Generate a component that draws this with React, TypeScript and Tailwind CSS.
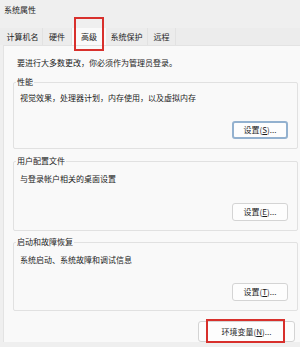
import React from "react";

const tabs = [
  { name: "计算机名", w: "w-[40px]" },
  { name: "硬件", w: "w-[29px]" },
  { name: "高级", w: "w-[34px]", active: true },
  { name: "系统保护", w: "w-[42px]" },
  { name: "远程", w: "w-[28px]" },
];

const groups = [
  {
    title: "性能",
    desc: "视觉效果，处理器计划，内存使用，以及虚拟内存",
    key: "S",
    cls: "mt-[13px] h-[68px] pt-[9px]",
    primary: true,
  },
  {
    title: "用户配置文件",
    desc: "与登录帐户相关的桌面设置",
    key: "E",
    cls: "mt-[12px] h-[70px] pt-[11px]",
  },
  {
    title: "启动和故障恢复",
    desc: "系统启动、系统故障和调试信息",
    key: "T",
    cls: "mt-[11px] h-[70px] pt-[11px]",
  },
];

function Btn({ k, primary }: { k: string; primary?: boolean }) {
  return (
    <div
      className={
        primary
          ? "mt-auto mb-[9px] mr-[9px] self-end w-[56px] h-[18px] flex items-center justify-center rounded-[3px] bg-[#fdfdfd] border-2 border-[#93b1cf]"
          : "mt-auto mb-[9px] mr-[9px] self-end w-[56px] h-[18px] flex items-center justify-center rounded-[3px] bg-[#fdfdfd] border border-[#d4d4d4]"
      }
    >
      设置(<span className="underline">{k}</span>)...
    </div>
  );
}

export default function App() {
  return (
    <div
      className="w-[300px] h-[347px] overflow-hidden bg-[#efefef] text-[8px] leading-[12px] text-[#1c1c1c]"
      style={{ fontFamily: '"Noto Sans CJK SC", "Noto Sans", sans-serif' }}
    >
      <div className="h-[28px] pl-[4px] pt-[4px]">系统属性</div>
      <div className="h-[17px] pl-[3px] flex bg-[#ececec]">
        {tabs.map((t) => (
          <div
            key={t.name}
            className={
              t.active
                ? t.w + " relative z-10 flex items-center justify-center bg-[#fafafa]"
                : t.w + " flex items-center justify-center border-r border-[#e2e2e2]"
            }
          >
            {t.name}
            {t.active && (
              <div className="absolute left-[2px] right-[2px] top-[-11px] bottom-[-6px] border-2 border-[#d8302c]" />
            )}
          </div>
        ))}
      </div>
      <div className="ml-[3px] h-[297px] bg-[#f9f9f9] border-l border-t border-[#e3e3e3] flex flex-col">
        <div className="pl-[13px] pt-[11px]">要进行大多数更改，你必须作为管理员登录。</div>
        {groups.map((g) => (
          <div
            key={g.title}
            className={
              g.cls +
              " relative ml-[9px] mr-[2px] border border-[#e1e1e1] rounded-[2px] pl-[6px] flex flex-col"
            }
          >
            <span className="absolute top-[-7px] left-[2px] px-[1px] bg-[#f9f9f9]">{g.title}</span>
            <div>{g.desc}</div>
            <Btn k={g.key} primary={g.primary} />
          </div>
        ))}
        <div className="relative mt-[10px] ml-auto mr-[5px] w-[97px] h-[21px] flex items-center justify-center rounded-[3px] bg-[#fdfdfd] border border-[#d4d4d4]">
          环境变量(<span className="underline">N</span>)...
          <div className="absolute left-[7px] right-[9px] top-[-3px] bottom-[-2px] border-2 border-[#d8302c]" />
        </div>
      </div>
    </div>
  );
}
